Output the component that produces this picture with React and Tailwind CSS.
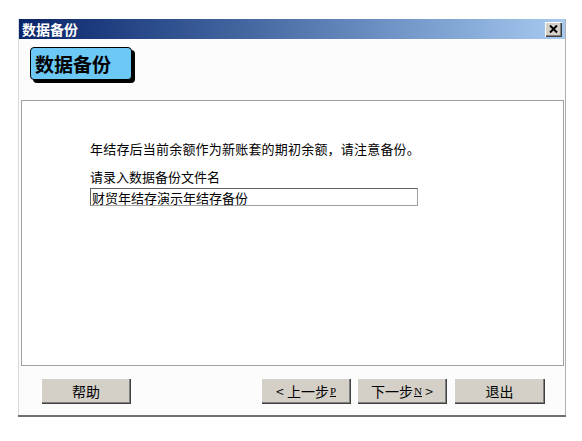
const cjk = { fontFamily: '"Noto Sans CJK SC", "Noto Sans", sans-serif' };

const Button = ({ children, className = "" }) => (
  <button
    className={`h-[26px] w-[90px] bg-[#d4d0c8] text-[14px] text-black flex items-center justify-center shadow-[inset_1px_1px_#ffffff,inset_-1px_-1px_#404040,inset_-2px_-2px_#808080] ${className}`}
    style={cjk}
  >
    {children}
  </button>
);

const Mnemonic = ({ children }) => (
  <span
    className="underline text-[11px] ml-[1px]"
    style={{ fontFamily: '"Liberation Serif", serif' }}
  >
    {children}
  </span>
);

const App = () => {
  return (
    <div className="w-[582px] h-[441px] bg-white pt-[19px] pl-[18px]" style={cjk}>
      <div className="w-[548px] h-[396px] flex flex-col bg-[#fcfcfc] border-l border-[#d8d8d8] border-r border-r-[#b0b0b0] shadow-[0_2px_0_#707070]">
        {/* title bar */}
        <div className="h-[20px] flex items-center justify-between bg-gradient-to-r from-[#0a246a] to-[#a6caf0] pl-[3px] pr-[3px]">
          <span className="text-white font-bold text-[14px] leading-none">数据备份</span>
          <button className="w-[17px] h-[15px] bg-[#d4d0c8] flex items-center justify-center shadow-[inset_1px_1px_#ffffff,inset_-1px_-1px_#404040,inset_-2px_-2px_#808080]">
            <svg width="9" height="8" viewBox="0 0 9 8">
              <path d="M1 0.5 L8 7.5 M8 0.5 L1 7.5" stroke="#000" strokeWidth="2" />
            </svg>
          </button>
        </div>

        {/* header */}
        <div className="h-[61px] pl-[11px] pt-[8px]">
          <div className="w-[102px] h-[33px] rounded-[4px] border border-black bg-[#6cc8f4] shadow-[3px_3px_0_#000] flex items-center pl-[4px]">
            <span className="text-[19px] font-bold leading-none text-black">数据备份</span>
          </div>
        </div>

        {/* content box */}
        <div className="ml-[2px] mr-[1px] h-[266px] border border-[#a0a0a0] bg-white pl-[68px] pt-[40px] text-[13px] text-black">
          <p className="leading-[16px] tracking-[0.2px]">年结存后当前余额作为新账套的期初余额，请注意备份。</p>
          <p className="leading-[16px] mt-[12px]">请录入数据备份文件名</p>
          <div className="mt-[3px] w-[328px] h-[18px] border border-[#a0a0a0] border-t-[#606060] border-l-[#606060] bg-white flex items-center pl-[1px] leading-none">
            财贸年结存演示年结存备份
          </div>
        </div>

        {/* buttons */}
        <div className="flex items-center pt-[12px] pl-[22px]">
          <Button>帮助</Button>
          <div className="flex-1" />
          <Button className="w-[89px]">
            &lt;&nbsp;上一步<Mnemonic>P</Mnemonic>
          </Button>
          <Button className="ml-[6px]">
            下一步<Mnemonic>N</Mnemonic>&nbsp;&gt;
          </Button>
          <Button className="ml-[7px] w-[91px] mr-[20px]">退出</Button>
        </div>
      </div>
    </div>
  );
};

export default App;
